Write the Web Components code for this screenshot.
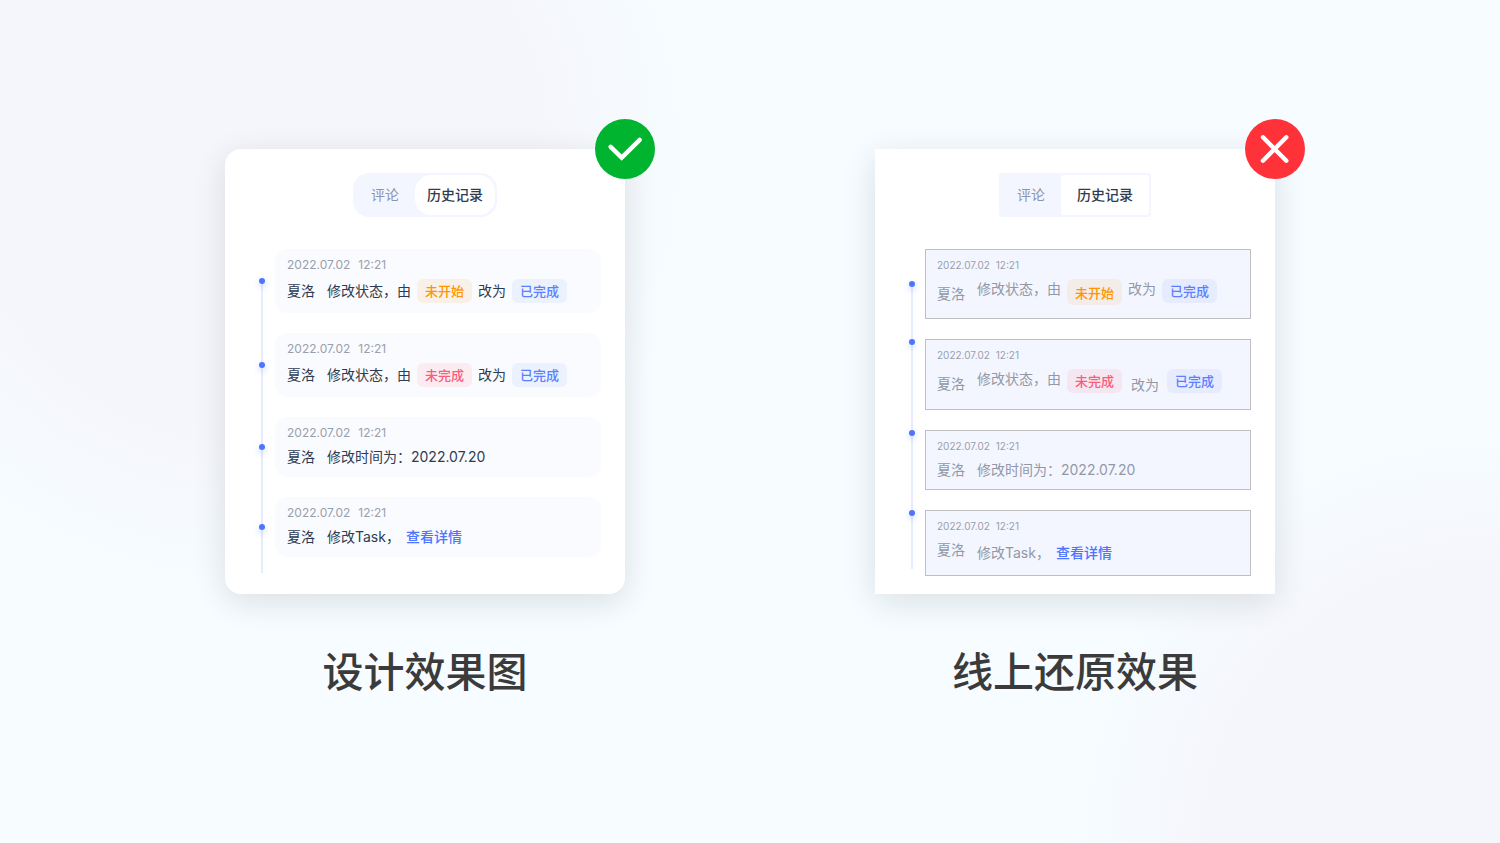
<!DOCTYPE html>
<html lang="zh-CN">
<head>
<meta charset="utf-8">
<meta name="viewport" content="width=device-width, initial-scale=1">
<title>设计效果图 / 线上还原效果</title>
<style>
  body {
    margin: 0;
    font-family: Inter, "Noto Sans CJK SC", sans-serif;
    font-size: 14px;
    line-height: 20px;
    color: #2f3b50;
  }
</style>
</head>
<body>
<compare-board>
  <compare-panel caption="设计效果图" verdict="pass">
    <tab-switch slot="tabs"></tab-switch>
    <history-list>
      <history-item>
        <span slot="name">夏洛</span>
        <span>修改状态，由</span>
        <status-tag tone="orange">未开始</status-tag>
        <span>改为</span>
        <status-tag>已完成</status-tag>
      </history-item>
      <history-item>
        <span slot="name">夏洛</span>
        <span>修改状态，由</span>
        <status-tag tone="red">未完成</status-tag>
        <span>改为</span>
        <status-tag>已完成</status-tag>
      </history-item>
      <history-item>
        <span slot="name">夏洛</span>
        <span>修改时间为：2022.07.20</span>
      </history-item>
      <history-item>
        <span slot="name">夏洛</span>
        <span>修改Task，</span>
        <detail-link>查看详情</detail-link>
      </history-item>
    </history-list>
  </compare-panel>

  <compare-panel caption="线上还原效果" verdict="fail">
    <tab-switch slot="tabs" square></tab-switch>
    <history-list rough>
      <history-item rough>
        <line-text slot="name" size="tall">夏洛</line-text>
        <span>修改状态，由</span>
        <status-tag tone="orange" heavy>未开始</status-tag>
        <span>改为</span>
        <status-tag>已完成</status-tag>
      </history-item>
      <history-item rough>
        <line-text slot="name" size="tall">夏洛</line-text>
        <span>修改状态，由</span>
        <status-tag tone="red">未完成</status-tag>
        <line-text size="tallest">改为</line-text>
        <status-tag>已完成</status-tag>
      </history-item>
      <history-item rough>
        <span slot="name">夏洛</span>
        <span>修改时间为：2022.07.20</span>
      </history-item>
      <history-item rough>
        <span slot="name">夏洛</span>
        <line-text size="medium">修改Task，</line-text>
        <line-text size="medium"><detail-link>查看详情</detail-link></line-text>
      </history-item>
    </history-list>
  </compare-panel>
</compare-board>

<script>
  const define = (name, html, setup) => {
    const template = document.createElement('template');
    template.innerHTML = html;
    customElements.define(name, class extends HTMLElement {
      constructor() {
        super();
        this.attachShadow({ mode: 'open' }).append(template.content.cloneNode(true));
      }
      connectedCallback() {
        if (setup) setup(this, this.shadowRoot);
      }
    });
  };

  define('compare-board', `
    <style>
      :host {
        display: grid;
        box-sizing: border-box;
        min-height: 100vh;
        grid-template-columns: repeat(2, minmax(0, 400px));
        justify-content: center;
        align-content: center;
        column-gap: calc(100vw / 6);
        background:
          radial-gradient(circle 30vw at 17% 18%, #f5f6fb 62%, rgba(245, 246, 251, 0) 100%),
          radial-gradient(circle 28vw at 99% 100%, #f5f6fb 64%, rgba(245, 246, 251, 0) 100%),
          #f6fcff;
      }
    </style>
    <slot></slot>
  `);

  define('compare-panel', `
    <style>
      :host { display: flex; flex-direction: column; }
      section {
        position: relative;
        flex: 1;
        display: flex;
        flex-direction: column;
        gap: 32px;
        padding: 24px 24px 18px 34px;
        background: #fff;
        box-shadow: 0 8px 32px rgba(20, 25, 30, .12);
      }
      :host([verdict="pass"]) section { border-radius: 16px; }
      .badge { position: absolute; top: -30px; right: -30px; width: 60px; height: 60px; }
      path { fill: none; stroke: #fff; stroke-width: 4.4; stroke-linecap: round; }
      .tabs { display: flex; justify-content: center; margin-left: -10px; }
      :host([verdict="pass"]) .cross, :host([verdict="fail"]) .check { display: none; }
      h2 {
        margin: 56px 0 0;
        font-size: 41px;
        line-height: 44px;
        font-weight: 500;
        text-align: center;
        white-space: nowrap;
        color: #3b3b3b;
      }
    </style>
    <section>
      <div class="tabs"><slot name="tabs"></slot></div>
      <slot></slot>
      <svg class="badge check" viewBox="0 0 60 60" aria-hidden="true">
        <circle cx="30" cy="30" r="30" fill="#00b42f"/><path d="M15.6 27.8 26.7 38.6 44.7 20.9"/>
      </svg>
      <svg class="badge cross" viewBox="0 0 60 60" aria-hidden="true">
        <circle cx="30" cy="30" r="30" fill="#ff323a"/><path d="M18 18.3 41.3 41.7M41.3 18.3 18 41.7"/>
      </svg>
    </section>
    <h2></h2>
  `, (host, root) => {
    root.querySelector('h2').textContent = host.getAttribute('caption');
  });

  define('tab-switch', `
    <style>
      :host {
        --inset: 12px;
        --round: 16px;
        display: flex;
        padding: 2px;
        border-radius: var(--round);
        background: #f3f6ff;
      }
      :host([square]) { --inset: 16px; --round: 3px; }
      button {
        border: 0;
        padding: 10px 16px;
        font: inherit;
        color: #8f94aa;
        background: none;
      }
      button[aria-pressed="true"] {
        padding: 10px var(--inset);
        border-radius: var(--round);
        font-weight: 500;
        color: #2f3b50;
        background: #fff;
      }
    </style>
    <button type="button" aria-pressed="false">评论</button>
    <button type="button" aria-pressed="true">历史记录</button>
  `);

  define('history-list', `
    <style>
      :host {
        display: flex;
        flex-direction: column;
        gap: 20px;
        padding-bottom: 16px;
        background: linear-gradient(#e6ecff, #e6ecff) 2px 100% / 2px calc(100% - 32px) no-repeat;
      }
      :host([rough]) {
        padding-bottom: 0;
        background-position: 2px 35px;
        background-size: 2px calc(100% - 42px);
      }
    </style>
    <slot></slot>
  `, host => host.setAttribute('role', 'list'));

  define('history-item', `
    <style>
      :host { display: flex; align-items: center; gap: 10px; }
      :host([rough]) { align-items: flex-start; }
      :host([rough]:first-child) { align-items: center; }
      .dot {
        width: 6px;
        height: 6px;
        border-radius: 50%;
        background: #4d74ff;
        box-shadow: 0 3px 6px rgba(77, 116, 255, .3);
      }
      article {
        flex: 1;
        min-width: 0;
        display: flex;
        flex-direction: column;
        gap: 6px;
        padding: 8px 12px 10px;
        border-radius: 12px;
        background: #fafbff;
      }
      :host([rough]) article {
        padding: 7px 11px 9px;
        border: 1px solid #bfc0c4;
        border-radius: 0;
        background: #f3f6ff;
      }
      time {
        display: flex;
        gap: 8px;
        font-size: 12px;
        line-height: 16px;
        color: #9a9fab;
      }
      .row { display: flex; align-items: center; gap: 12px; white-space: nowrap; }
      .action { display: flex; align-items: center; gap: 6px; }
      :host([rough]) time { gap: 6px; font-size: 10px; }
      :host([rough]) .row, :host([rough]) .action { align-items: flex-start; color: #9398a6; }
    </style>
    <span class="dot"></span>
    <article>
      <time datetime="2022-07-02T12:21"><span>2022.07.02</span><span>12:21</span></time>
      <div class="row">
        <slot name="name"></slot>
        <div class="action"><slot></slot></div>
      </div>
    </article>
  `, host => host.setAttribute('role', 'listitem'));

  define('line-text', `
    <style>
      :host { display: block; }
      :host([size="medium"]) { line-height: 26px; }
      :host([size="tall"]) { line-height: 30px; }
      :host([size="tallest"]) { line-height: 31px; padding: 0 2px 0 3px; }
    </style>
    <slot></slot>
  `);

  define('status-tag', `
    <style>
      :host {
        display: block;
        padding: 2px 8px;
        border-radius: 6px;
        font-size: 13px;
        line-height: 20px;
        font-weight: 500;
        color: #5b7fff;
        background: rgba(77, 130, 245, .08);
      }
      :host([tone="orange"]) { color: #ff9500; background: rgba(245, 150, 26, .1); }
      :host([tone="red"]) { color: #fa5c7c; background: rgba(250, 92, 104, .09); }
      :host([heavy]) { padding-top: 4px; }
    </style>
    <slot></slot>
  `);

  define('detail-link', `
    <style>
      :host { display: block; }
      a { font-weight: 500; color: #4d74ff; text-decoration: none; }
    </style>
    <a href="#detail"><slot></slot></a>
  `);
</script>
</body>
</html>
